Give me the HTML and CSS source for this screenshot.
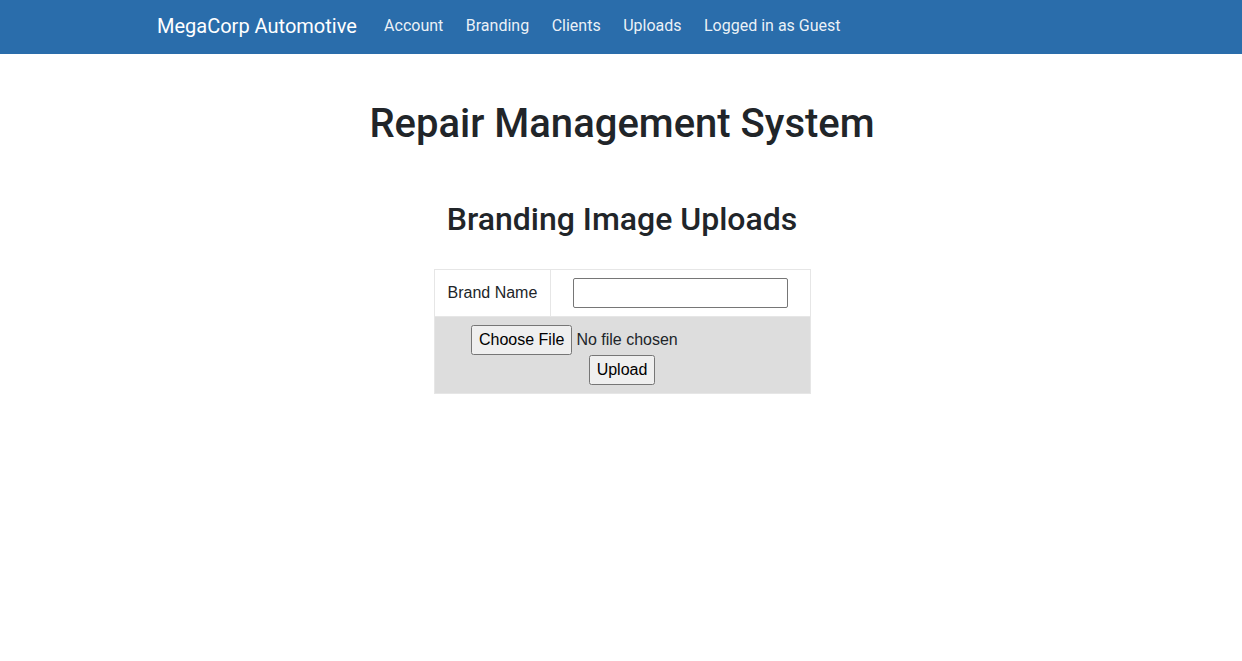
FILE: index.html
```html
<!DOCTYPE html>
<html lang="en">
<head>
<meta charset="utf-8">
<title>Repair Management System</title>
<link rel="stylesheet" href="styles.css">
</head>
<body>
<nav class="navbar">
  <div class="nav-inner">
    <a class="brand" href="#">MegaCorp Automotive</a>
    <ul class="nav-links">
      <li><a href="#">Account</a></li>
      <li><a href="#">Branding</a></li>
      <li><a href="#">Clients</a></li>
      <li><a href="#">Uploads</a></li>
      <li><a href="#">Logged in as Guest</a></li>
    </ul>
  </div>
</nav>
<main class="content">
  <h1 class="title">Repair Management System</h1>
  <h2 class="subtitle">Branding Image Uploads</h2>
  <form class="upload-form">
    <table class="upload-table">
      <tr>
        <td class="label-cell">Brand Name</td>
        <td class="input-cell"><input class="text-input" type="text"></td>
      </tr>
      <tr class="file-row">
        <td colspan="2">
          <input class="file-input" type="file"><br>
          <button class="btn" type="button">Upload</button>
        </td>
      </tr>
    </table>
  </form>
</main>
</body>
</html>
```
FILE: styles.css
```css
html, body {
  margin: 0;
  padding: 0;
  background: #fff;
}
body {
  font-family: Roboto, "Liberation Sans", sans-serif;
  color: #212529;
}
.navbar {
  background: #2a6dab;
  height: 54px;
}
.nav-inner {
  height: 54px;
  box-sizing: border-box;
  padding-bottom: 2px;
  display: flex;
  align-items: center;
  padding-left: 157px;
}
.brand {
  color: #fff;
  font-size: 20px;
  text-decoration: none;
  margin-right: 16px;
  line-height: 30px;
}
.nav-links {
  list-style: none;
  display: flex;
  margin: 0;
  padding: 0;
}
.nav-links a {
  display: block;
  padding: 0 11.25px;
  color: rgba(255, 255, 255, 0.92);
  text-decoration: none;
  font-size: 16px;
  line-height: 24px;
}
.content {
  text-align: center;
  padding-top: 46px;
  padding-left: 2px;
}
.title {
  font-size: 40px;
  font-weight: 500;
  line-height: 48px;
  margin: 0;
}
.subtitle {
  font-size: 32px;
  font-weight: 500;
  line-height: 38px;
  margin: 52px 0 0;
}
.upload-form {
  margin-top: 31px;
}
.upload-table {
  margin: 0 auto;
  border-collapse: collapse;
  width: 377px;
  font-family: "Liberation Sans", Arial, sans-serif;
  font-size: 16px;
}
.upload-table td {
  border: 1px solid #e6e6e6;
  padding: 8px 13px;
}
.label-cell {
  width: 89px;
  white-space: nowrap;
}
.input-cell {
  text-align: center;
}
.text-input {
  width: 215px;
  height: 30px;
  box-sizing: border-box;
  border: 1px solid #767676;
  border-radius: 2px;
  font-family: "Liberation Sans", Arial, sans-serif;
  font-size: 16px;
  vertical-align: middle;
}
.file-row td {
  background: #ddd;
  text-align: center;
  line-height: 1;
}
.file-input {
  font-family: "Liberation Sans", Arial, sans-serif;
  font-size: 16px;
  width: 302px;
  vertical-align: top;
}
.file-input::file-selector-button {
  font-family: "Liberation Sans", Arial, sans-serif;
  font-size: 16px;
  padding: 4px 6px;
  margin-right: 4px;
}
.btn {
  font-family: "Liberation Sans", Arial, sans-serif;
  font-size: 16px;
  padding: 4px 6px;
  vertical-align: top;
}
```
